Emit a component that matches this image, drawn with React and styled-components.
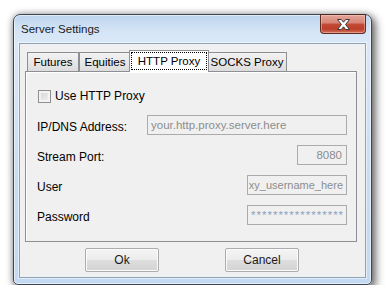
import React from 'react';
import styled, { createGlobalStyle } from 'styled-components';

const GlobalStyle = createGlobalStyle`
  html, body {
    margin: 0;
    background: #ffffff;
  }
  body {
    font-family: "Liberation Sans", Arial, sans-serif;
    font-size: 12px;
    color: #000;
  }
`;

const Page = styled.div`
  padding: 14px 0 0 13px;
`;

const Window = styled.div`
  box-sizing: border-box;
  width: 359px;
  height: 271px;
  display: flex;
  flex-direction: column;
  padding: 0 5px 6px 5px;
  border: 1px solid #3f4650;
  border-radius: 7px 7px 5px 5px;
  background: linear-gradient(to bottom, #bdd4ed 0px, #d5e5f6 16px, #dae8f7 28px, #c9ddf2 60%, #c3daf2 100%);
  box-shadow: inset 0 0 0 1px rgba(255, 255, 255, 0.55),
    3px 4px 9px 1px rgba(0, 0, 0, 0.5),
    0 0 7px rgba(0, 0, 0, 0.3);
`;

const TitleBar = styled.div`
  height: 28px;
  display: flex;
  align-items: flex-start;
  justify-content: space-between;
  padding-left: 2px;
`;

const Title = styled.div`
  font-size: 11.5px;
  line-height: 28px;
  color: #1b1b1b;
`;

const CloseButton = styled.div`
  box-sizing: border-box;
  width: 46px;
  height: 20px;
  margin-top: -1px;
  display: flex;
  align-items: center;
  justify-content: center;
  border: 1px solid #5e2a22;
  border-top-color: #4a2a26;
  border-radius: 0 0 4px 4px;
  background: linear-gradient(to bottom, #e3a699 0%, #d68476 45%, #c24b37 50%, #bd3f2b 78%, #d2705b 100%);
  box-shadow: inset 0 0 0 1px rgba(255, 210, 200, 0.45);
`;

const Client = styled.div`
  flex: 1;
  display: flex;
  flex-direction: column;
  padding: 6px 8px 5px 5px;
  border: 1px solid #8ea2b9;
  background: #f0f0f0;
  box-shadow: 0 0 0 1px rgba(255, 255, 255, 0.5);
`;

const TabStrip = styled.div`
  height: 21px;
  display: flex;
  align-items: flex-end;
  padding-left: 2px;
`;

const Tab = styled.div`
  box-sizing: border-box;
  position: relative;
  z-index: ${({ $active }) => ($active ? 2 : 1)};
  width: ${({ $w }) => $w}px;
  height: ${({ $active }) => ($active ? 22 : 19)}px;
  margin: 0 ${({ $active }) => ($active ? -2 : 0)}px ${({ $active }) => ($active ? -1 : 0)}px;
  padding: ${({ $active }) => ($active ? '1px 1px 2px' : '0')};
  display: flex;
  align-items: center;
  justify-content: center;
  border: 1px solid #8c8e94;
  border-bottom: none;
  background: ${({ $active }) => ($active ? '#ffffff' : 'linear-gradient(to bottom, #f3f3f3, #dcdcdc)')};
  font-size: 11.5px;
  white-space: nowrap;
`;

const Focus = styled.span`
  box-sizing: border-box;
  flex: 1;
  align-self: stretch;
  display: flex;
  align-items: center;
  justify-content: center;
  border: 1px dotted #000;
`;

const Panel = styled.div`
  flex: 1;
  display: flex;
  flex-direction: column;
  gap: 10px;
  padding: 18px 9px 0 11px;
  border: 1px solid #8d8f94;
  background: #f0f0f0;
  box-shadow: inset 1px 1px 0 #ffffff;
`;

const CheckRow = styled.label`
  height: 13px;
  display: flex;
  align-items: center;
  gap: 4px;
  margin: 0 0 2px 1px;
  line-height: 13px;
`;

const CheckBox = styled.span`
  box-sizing: border-box;
  width: 13px;
  height: 13px;
  border: 1px solid #8e8f8f;
  background: linear-gradient(135deg, #d2d2d2, #f4f4f4);
  box-shadow: inset 0 0 0 2px #f3f3f3;
`;

const Row = styled.div`
  height: 20px;
  display: flex;
  justify-content: space-between;
`;

const Label = styled.div`
  padding-top: 2px;
  line-height: 20px;
  height: 20px;
`;

const Field = styled.div`
  box-sizing: border-box;
  width: ${({ $w }) => $w}px;
  height: 20px;
  display: flex;
  align-items: center;
  justify-content: ${({ $align }) => ($align === 'right' ? 'flex-end' : 'flex-start')};
  padding: ${({ $tight }) => ($tight ? '0 3px 0 1px' : '0 4px 0 3px')};
  overflow: hidden;
  white-space: nowrap;
  border: 1px solid #ababab;
  background: #f0f0f0;
  color: ${({ $secret }) => ($secret ? '#8ea3c0' : '#8d8d8d')};
  font-size: ${({ $tight }) => ($tight ? 11 : 11.5)}px;
  letter-spacing: ${({ $secret }) => ($secret ? '1px' : 'normal')};
`;

const ButtonRow = styled.div`
  height: 24px;
  margin-top: 6px;
  display: flex;
  justify-content: center;
  gap: 66px;
  padding-left: 2px;
`;

const Button = styled.div`
  box-sizing: border-box;
  width: 74px;
  height: 24px;
  display: flex;
  align-items: center;
  justify-content: center;
  border: 1px solid #acacac;
  border-radius: 2px;
  background: linear-gradient(to bottom, #f4f4f4 0%, #ececec 50%, #dedede 50%, #d3d3d3 100%);
  box-shadow: inset 0 0 0 1px #fbfbfb;
  font-size: 12px;
  color: #1a1a1a;
`;

const tabs = [
  { label: 'Futures', w: 52 },
  { label: 'Equities', w: 52 },
  { label: 'HTTP Proxy', w: 80, active: true },
  { label: 'SOCKS Proxy', w: 80 },
];

const fields = [
  { label: 'IP/DNS Address:', w: 200, value: 'your.http.proxy.server.here' },
  { label: 'Stream Port:', w: 50, value: '8080', align: 'right' },
  { label: 'User', w: 100, value: 'xy_username_here', align: 'right', tight: true },
  { label: 'Password', w: 100, value: '*****************', secret: true },
];

function CloseGlyph() {
  return (
    <svg width="13" height="11" viewBox="0 0 13 11">
      <polygon
        points="0.5,0.5 4.3,0.5 6.5,3.2 8.7,0.5 12.5,0.5 8.6,5.5 12.5,10.5 8.7,10.5 6.5,7.8 4.3,10.5 0.5,10.5 4.4,5.5"
        fill="#ffffff"
        stroke="#3a3a3a"
        strokeWidth="1"
        strokeLinejoin="round"
      />
    </svg>
  );
}

export default function App() {
  return (
    <Page>
      <GlobalStyle />
      <Window>
        <TitleBar>
          <Title>Server Settings</Title>
          <CloseButton>
            <CloseGlyph />
          </CloseButton>
        </TitleBar>
        <Client>
          <TabStrip>
            {tabs.map((t) => (
              <Tab key={t.label} $w={t.w} $active={t.active}>
                {t.active ? <Focus>{t.label}</Focus> : t.label}
              </Tab>
            ))}
          </TabStrip>
          <Panel>
            <CheckRow>
              <CheckBox />
              Use HTTP Proxy
            </CheckRow>
            {fields.map((f) => (
              <Row key={f.label}>
                <Label>{f.label}</Label>
                <Field $w={f.w} $align={f.align} $secret={f.secret} $tight={f.tight}>
                  <span>{f.value}</span>
                </Field>
              </Row>
            ))}
          </Panel>
          <ButtonRow>
            <Button>Ok</Button>
            <Button>Cancel</Button>
          </ButtonRow>
        </Client>
      </Window>
    </Page>
  );
}
